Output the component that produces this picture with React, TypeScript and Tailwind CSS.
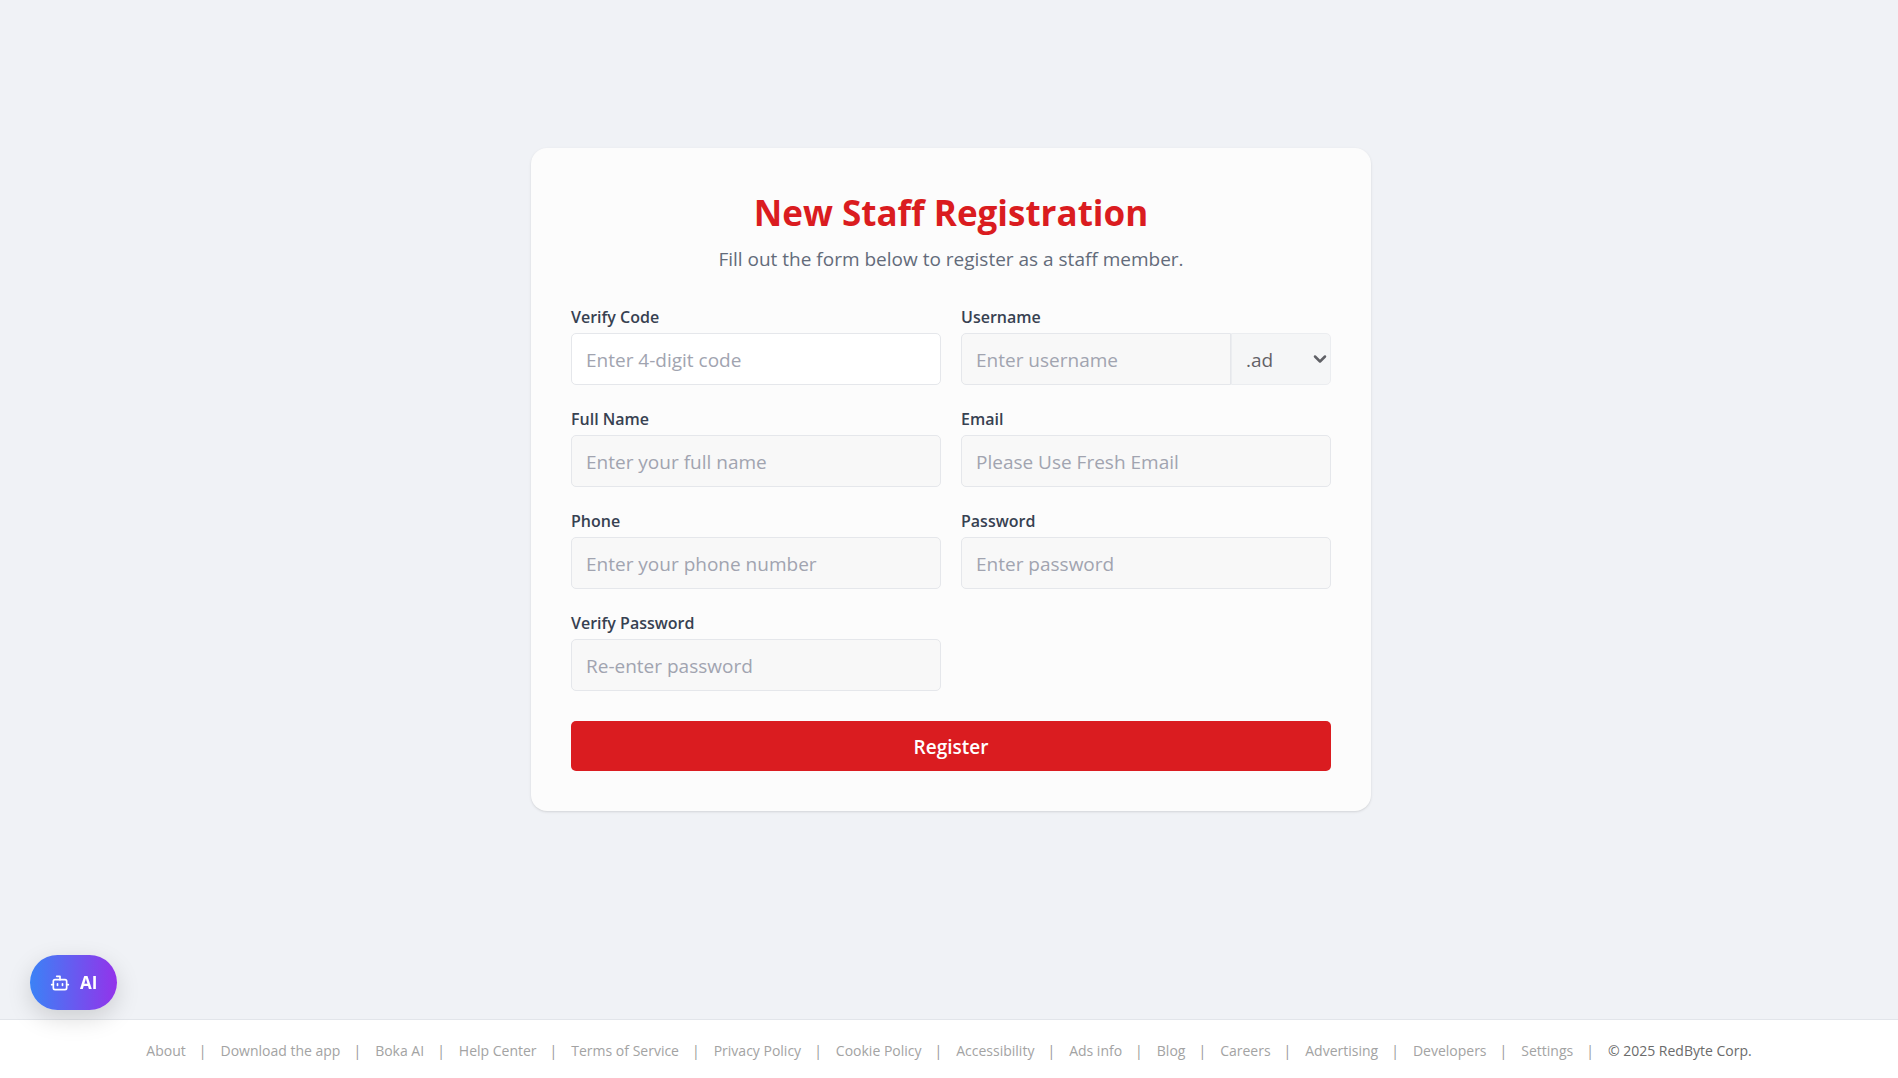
import { Bot, ChevronDown } from "lucide-react";

const inputBase =
  "h-[52px] w-full min-w-0 rounded-[5px] border border-[#e5e7eb] px-3.5 pt-0.5 text-[19px] text-[#374151] placeholder:text-[#a1a4b0] focus:outline-none";

type FieldProps = {
  id: string;
  label: string;
  placeholder: string;
  type?: string;
  disabled?: boolean;
};

function Label({ id, children }: { id: string; children: string }) {
  return (
    <label htmlFor={id} className="text-base font-semibold leading-7 text-[#374151]">
      {children}
    </label>
  );
}

function Field({ id, label, placeholder, type = "text", disabled = true }: FieldProps) {
  return (
    <div className="flex flex-col gap-0.5">
      <Label id={id}>{label}</Label>
      <input
        id={id}
        type={type}
        placeholder={placeholder}
        disabled={disabled}
        className={`${inputBase} bg-white disabled:bg-[#f8f8f8]`}
      />
    </div>
  );
}

const links = [
  "About",
  "Download the app",
  "Boka AI",
  "Help Center",
  "Terms of Service",
  "Privacy Policy",
  "Cookie Policy",
  "Accessibility",
  "Ads info",
  "Blog",
  "Careers",
  "Advertising",
  "Developers",
  "Settings",
];

export default function App() {
  return (
    <div className="flex min-h-screen flex-col bg-[#f0f2f6] font-['Open_Sans','Noto_Sans',sans-serif]">
      <main className="flex flex-1 items-center justify-center pt-5 pr-5 pb-20 pl-6">
        <form
          onSubmit={(e) => e.preventDefault()}
          className="w-full max-w-[840px] rounded-2xl bg-[#fcfcfc] p-10 shadow"
        >
          <h1 className="text-center text-[35px] font-bold leading-[50px] text-[#da1c20]">
            New Staff Registration
          </h1>
          <p className="mt-1.5 text-center text-[19px] leading-[31px] text-[#636b7a]">
            Fill out the form below to register as a staff member.
          </p>
          <div className="mt-7 grid grid-cols-1 gap-5 md:grid-cols-2">
            <Field id="code" label="Verify Code" placeholder="Enter 4-digit code" disabled={false} />
            <div className="flex flex-col gap-0.5">
              <Label id="username">Username</Label>
              <div className="flex">
                <input
                  id="username"
                  type="text"
                  placeholder="Enter username"
                  disabled
                  className={`${inputBase} flex-1 rounded-r-none bg-[#f8f8f8]`}
                />
                <div className="relative w-[100px] opacity-70">
                  <select
                    aria-label="Username suffix"
                    disabled
                    defaultValue=".ad"
                    className="h-[52px] w-full appearance-none rounded-r-[5px] border border-[#e5e7eb] bg-[#f3f4f6] px-3.5 pt-0.5 text-[19px] text-[#1f2028] opacity-100"
                  >
                    <option>.ad</option>
                  </select>
                  <ChevronDown
                    size={20}
                    strokeWidth={3}
                    aria-hidden="true"
                    className="pointer-events-none absolute inset-y-0 right-px my-auto text-[#1f2028]"
                  />
                </div>
              </div>
            </div>
            <Field id="fullname" label="Full Name" placeholder="Enter your full name" />
            <Field id="email" label="Email" type="email" placeholder="Please Use Fresh Email" />
            <Field id="phone" label="Phone" type="tel" placeholder="Enter your phone number" />
            <Field id="password" label="Password" type="password" placeholder="Enter password" />
            <Field id="verify" label="Verify Password" type="password" placeholder="Re-enter password" />
          </div>
          <button
            type="submit"
            className="mt-[30px] h-[50px] w-full rounded-[5px] bg-[#da1c20] pt-0.5 text-[19px] font-semibold text-white"
          >
            Register
          </button>
        </form>
      </main>

      <footer className="border-t border-[#e2e5ea] bg-white px-5 pt-5 pb-[17px] text-sm leading-[21px] text-[#a3a3a3]">
        <nav aria-label="Footer" className="flex flex-wrap justify-center gap-x-3.5">
          {links.map((link) => (
            <span key={link} className="flex gap-x-[13px]">
              <a href="#">{link}</a>
              <span aria-hidden="true" className="text-[#999999]">|</span>
            </span>
          ))}
          <span className="text-[#6b6b6b]">© 2025 RedByte Corp.</span>
        </nav>
      </footer>

      <button
        type="button"
        className="fixed bottom-[68px] left-[30px] flex h-[55px] items-center gap-2.5 rounded-full bg-linear-to-r/srgb from-[#3b82f6] to-[#9333ea] px-5 text-[17px] font-bold text-white shadow-[0_8px_24px_rgba(0,0,0,0.15)]"
      >
        <Bot size={20} aria-hidden="true" />
        AI
      </button>
    </div>
  );
}
